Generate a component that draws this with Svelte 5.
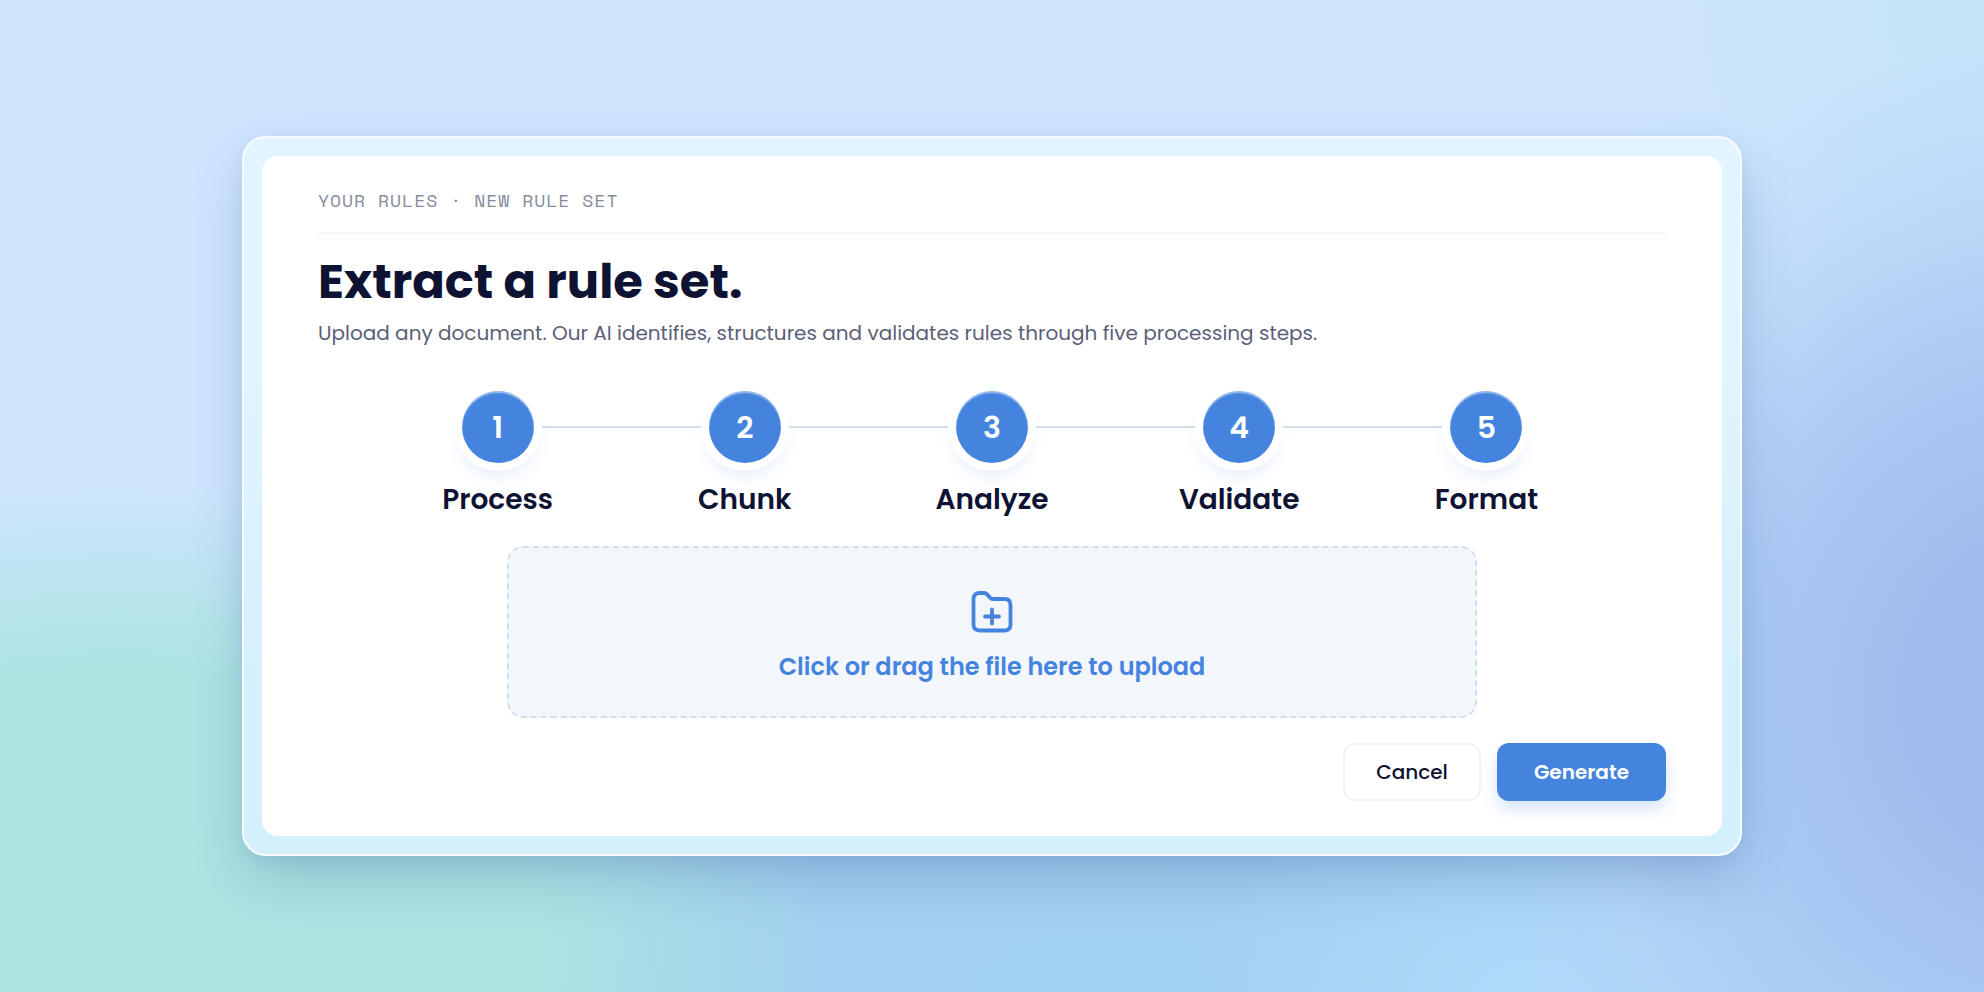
<script lang="ts">
  const steps = ['Process', 'Chunk', 'Analyze', 'Validate', 'Format']
</script>

<main class="page">
  <div class="frame">
    <section class="card" aria-labelledby="title">
      <p class="eyebrow">Your rules · New rule set</p>

      <h1 id="title">Extract a rule set.</h1>
      <p class="lead">
        Upload any document. Our AI identifies, structures and validates rules through five processing steps.
      </p>

      <ol class="steps">
        {#each steps as step, i}
          <li class="step">
            <div class="marker">
              <span class="number">{i + 1}</span>
            </div>
            <span class="stepLabel">{step}</span>
          </li>
        {/each}
      </ol>

      <label class="dropzone" for="file">
        <input id="file" class="fileInput" type="file" />
        <svg class="folder" viewBox="0 0 48 48" aria-hidden="true">
          <path
            d="M11.5 5H16.3Q17.8 5 18.8 6.1L22.4 10.1Q23.2 11 24.5 11H36.5Q42.5 11 42.5 17V36.5Q42.5 42.5 36.5 42.5H11.5Q5.5 42.5 5.5 36.5V11Q5.5 5 11.5 5Z"
          />
          <path d="M24 21.5V35.5M17 28.5H31" />
        </svg>
        <span class="dropText">Click or drag the file here to upload</span>
      </label>

      <div class="actions">
        <button class="button cancel" type="button">Cancel</button>
        <button class="button generate" type="button">Generate</button>
      </div>
    </section>
  </div>
</main>

<style>
  :global(body) {
    margin: 0;
  }

  .page {
    box-sizing: border-box;
    min-height: 100vh;
    padding: 32px;
    display: flex;
    align-items: center;
    justify-content: center;
    font-family: Poppins, Inter, 'Open Sans', sans-serif;
    color: #0e1233;
    background:
      radial-gradient(
        ellipse 31% 66% at 104% 70%,
        #a0b8eb 0%,
        #a2bbed 24%,
        rgba(167, 198, 242, 0.9) 52%,
        rgba(178, 210, 246, 0.5) 78%,
        rgba(190, 220, 248, 0) 100%
      ),
      radial-gradient(ellipse 18% 26% at 78% 102%, #b2dbfb 0%, rgba(178, 219, 251, 0) 100%),
      radial-gradient(ellipse 36% 48% at 6% 96%, #abe4e1 0%, #abe4e1 58%, rgba(171, 228, 225, 0) 100%),
      radial-gradient(ellipse 60% 52% at 56% 100%, #a2d2f1 0%, #a2d0f1 40%, rgba(161, 208, 241, 0) 100%),
      radial-gradient(ellipse 20% 42% at 100% 0%, #c3e3f8 0%, rgba(195, 227, 248, 0) 100%),
      #cfe5fe;
  }

  .frame {
    box-sizing: border-box;
    width: 100%;
    max-width: 1500px;
    padding: 18px;
    border: 2px solid #f8fcff;
    border-radius: 24px;
    background: linear-gradient(180deg, #e2f4ff 30%, #d5f0fd 75%);
    box-shadow:
      0 24px 56px -8px rgba(50, 90, 150, 0.3),
      0 4px 16px rgba(80, 120, 200, 0.1);
  }

  .card {
    padding: 32px 56px 35px;
    border-radius: 16px;
    background: #fff;
  }

  .eyebrow {
    margin: 0;
    padding-bottom: 20px;
    border-bottom: 2px solid #f2f5fa;
    font-family: 'Space Mono', 'Liberation Mono', monospace;
    font-size: 18px;
    line-height: 24px;
    letter-spacing: 1px;
    text-transform: uppercase;
    color: #868c9c;
  }

  h1 {
    margin: 20px 0 0;
    font-size: 48px;
    font-weight: 700;
    line-height: 56px;
  }

  .lead {
    margin: 8px 0 0;
    font-size: 20px;
    line-height: 30px;
    color: #5b6078;
  }

  .steps {
    display: grid;
    grid-template-columns: repeat(5, 1fr);
    max-width: 1236px;
    margin: 43px auto 0;
    padding: 0;
    list-style: none;
  }

  .step {
    display: flex;
    flex-direction: column;
    gap: 17px;
    text-align: center;
  }

  .marker {
    display: flex;
    align-items: center;
    gap: 8px;
  }

  .marker::before,
  .marker::after {
    content: '';
    flex: 1;
    height: 2px;
    background: #d4deeb;
  }

  .step:first-child .marker::before,
  .step:last-child .marker::after {
    background: none;
  }

  .number {
    width: 72px;
    height: 72px;
    border-radius: 50%;
    background: #4484df;
    box-shadow:
      inset 0 2px 1px rgba(255, 255, 255, 0.45),
      0 0 0 8px #fff,
      0 12px 16px 2px rgba(68, 132, 223, 0.13);
    font-size: 30px;
    font-weight: 600;
    line-height: 74px;
    color: #fff;
  }

  .stepLabel {
    font-size: 28px;
    font-weight: 600;
    line-height: 40px;
  }

  .dropzone {
    box-sizing: border-box;
    display: flex;
    flex-direction: column;
    align-items: center;
    gap: 15px;
    max-width: 970px;
    margin: 26px auto 0;
    padding: 40px 24px 33px;
    border: 2px dashed #d4deea;
    border-radius: 16px;
    background: #f3f6fb;
    color: #4484df;
    cursor: pointer;
  }

  .fileInput {
    position: absolute;
    width: 1px;
    height: 1px;
    opacity: 0;
  }

  .folder {
    width: 48px;
    height: 48px;
    fill: none;
    stroke: currentColor;
    stroke-width: 3.8;
    stroke-linecap: round;
    stroke-linejoin: round;
  }

  .dropText {
    font-size: 24px;
    font-weight: 600;
    line-height: 32px;
  }

  .actions {
    display: flex;
    justify-content: flex-end;
    gap: 16px;
    margin-top: 25px;
  }

  .button {
    box-sizing: border-box;
    height: 58px;
    border-radius: 12px;
    font: inherit;
    font-size: 20px;
    cursor: pointer;
  }

  .cancel {
    min-width: 138px;
    border: 2px solid #f0f4fa;
    background: #fff;
    color: #0e1233;
    font-weight: 500;
  }

  .generate {
    min-width: 169px;
    border: 0;
    background: #4484df;
    color: #fff;
    font-weight: 600;
    box-shadow: 0 8px 16px rgba(68, 132, 223, 0.22);
  }
</style>
